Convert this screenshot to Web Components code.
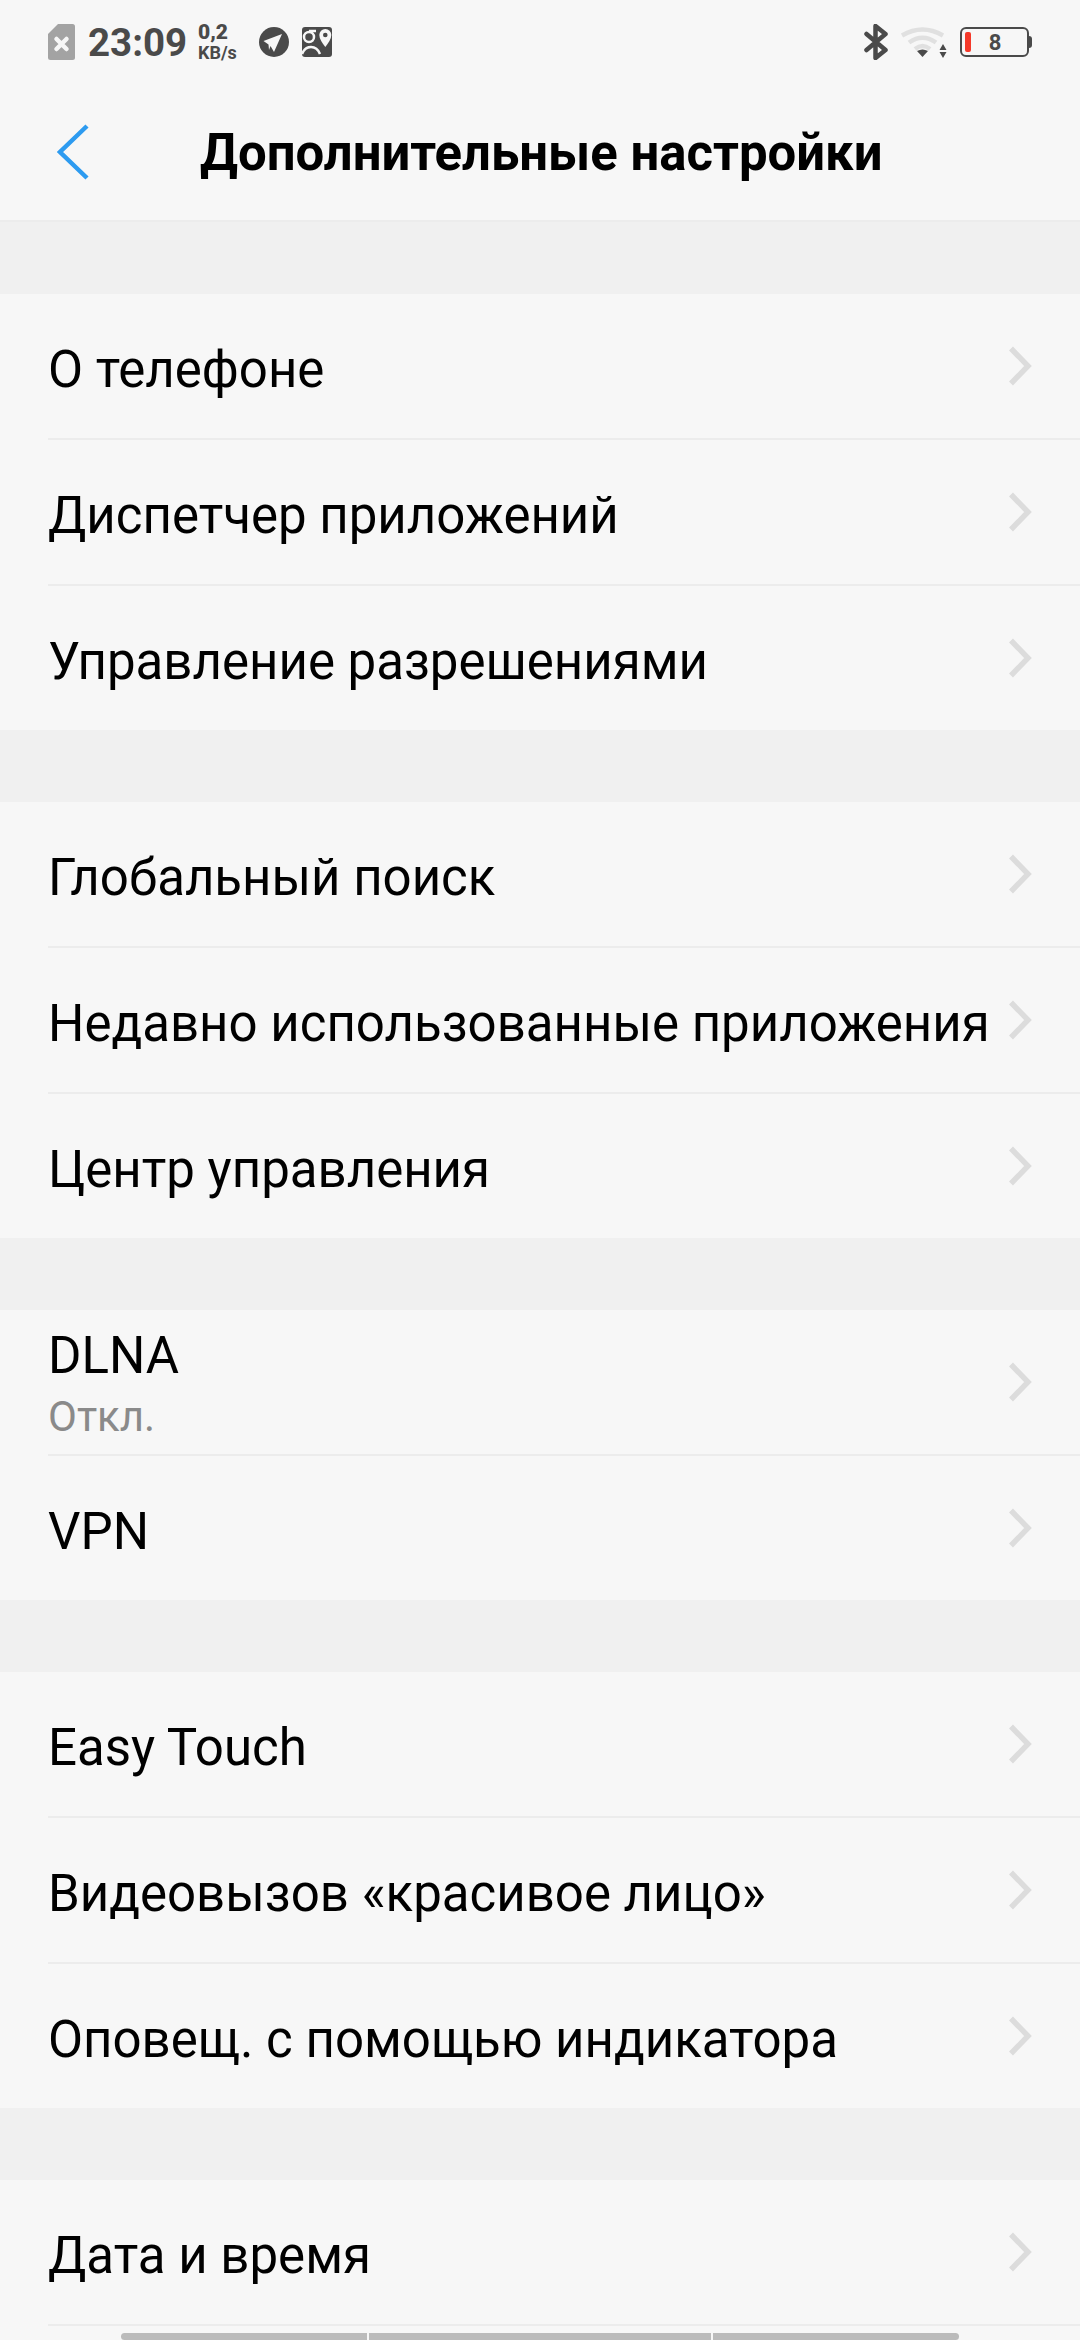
<!DOCTYPE html>
<html>
<head>
<meta charset="utf-8">
<style>
    html, body { margin: 0; padding: 0; }
    body {
        width: 1080px;
        height: 2340px;
        overflow: hidden;
        background: #f0f0f0;
        font-family: "Roboto", "Liberation Sans", sans-serif;
    }
</style>
</head>
<body>
<status-bar></status-bar>
<title-bar>Дополнительные настройки</title-bar>
<setting-group>
    <setting-row>О телефоне</setting-row>
    <setting-row>Диспетчер приложений</setting-row>
    <setting-row last>Управление разрешениями</setting-row>
</setting-group>
<setting-group>
    <setting-row>Глобальный поиск</setting-row>
    <setting-row>Недавно использованные приложения</setting-row>
    <setting-row last>Центр управления</setting-row>
</setting-group>
<setting-group>
    <setting-row sub="Откл.">DLNA</setting-row>
    <setting-row last>VPN</setting-row>
</setting-group>
<setting-group>
    <setting-row>Easy Touch</setting-row>
    <setting-row>Видеовызов «красивое лицо»</setting-row>
    <setting-row last>Оповещ. с помощью индикатора</setting-row>
</setting-group>
<setting-group>
    <setting-row>Дата и время</setting-row>
</setting-group>
<nav-handle></nav-handle>

<script>
class StatusBar extends HTMLElement {
    connectedCallback() {
        this.attachShadow({ mode: 'open' });
        this.shadowRoot.innerHTML = `
        <style>
            :host {
                display: flex;
                align-items: center;
                height: 84px;
                padding: 0 0 0 48px;
                background: #f7f7f7;
                color: #4a4a4a;
                font-family: "Roboto", "Liberation Sans", sans-serif;
            }
            svg { display: block; flex: none; }
            .time {
                font-size: 38.500px;
                font-weight: 700;
                margin-left: 13px;
                width: 97px;
                white-space: nowrap;
            }
            .speed {
                margin-left: 13px;
                font-size: 18px;
                font-weight: 700;
                line-height: 19px;
                width: 41px;
            }
            .speed b { display: block; font-size: 21px; line-height: 21px; }
            .right { margin-left: auto; display: flex; align-items: center; }
        </style>
        <svg width="27" height="36" viewBox="0 0 27 36">
            <path d="M10 0H24.500a2.500 2.500 0 0 1 2.500 2.500V33.500a2.500 2.500 0 0 1-2.500 2.500H2.500a2.500 2.500 0 0 1-2.500-2.500V10z" fill="#a3a3a3"/>
            <path d="M8.500 15l10 10M18.500 15l-10 10" stroke="#f7f7f7" stroke-width="4.500" stroke-linecap="round"/>
        </svg>
        <span class="time">23:09</span>
        <span class="speed"><b>0,2</b>KB/s</span>
        <svg width="30" height="30" viewBox="0 0 30 30" style="margin-left:20px">
            <circle cx="15" cy="15" r="15" fill="#4a4a4a"/>
            <path d="M4.500 14L23 7 15 25 11.500 19 10 23 9.500 17.500z" fill="#f7f7f7"/>
        </svg>
        <svg width="30" height="30" viewBox="0 0 30 30" style="margin-left:13px">
            <rect width="30" height="30" rx="3" fill="#4a4a4a"/>
            <circle cx="7" cy="10" r="5" fill="none" stroke="#f7f7f7" stroke-width="2.500"/>
            <path d="M7 4h7M0 27c2-5 5-7 9-7s7 2 9 7" fill="none" stroke="#f7f7f7" stroke-width="2.500"/>
            <path d="M23.300 2a6 6 0 0 1 6 6c0 4-3 8-6 12-3-4-6-8-6-12a6 6 0 0 1 6-6z" fill="#f7f7f7"/>
            <circle cx="23.300" cy="8" r="2.300" fill="#4a4a4a"/>
        </svg>
        <div class="right">
            <svg width="24" height="36" viewBox="0 0 24 36" style="margin-right:12px">
                <path d="M2.500 10l19 16-10 8V2l10 8-19 16" fill="none" stroke="#4a4a4a" stroke-width="4.500" stroke-linejoin="round" stroke-linecap="round"/>
            </svg>
            <svg width="47" height="36" viewBox="0 0 47 36" style="margin-right:13px">
                <path d="M2 11.500Q22.500-.5 43 11.500" fill="none" stroke="#e0e0e0" stroke-width="4.500"/>
                <path d="M9 18.500Q22.500 9 36 18.500" fill="none" stroke="#e0e0e0" stroke-width="4.500"/>
                <path d="M15 25Q22.500 19 30 25" fill="none" stroke="#e0e0e0" stroke-width="4.500"/>
                <path d="M17 27Q22.500 24 28 27L22.500 33z" fill="#4a4a4a"/>
                <path d="M43 20l-3.500 6h7zM43 34l-3.500-6h7z" fill="#4a4a4a"/>
            </svg>
            <battery-icon level="8"></battery-icon>
        </div>`;
    }
}

class BatteryIcon extends HTMLElement {
    connectedCallback() {
        this.attachShadow({ mode: 'open' });
        this.shadowRoot.innerHTML = `
        <style>
            :host { display: flex; align-items: center; margin-right: 48px; }
            .shell {
                box-sizing: border-box;
                width: 69px;
                height: 30px;
                border: 2px solid #4a4a4a;
                border-radius: 6px;
                display: flex;
                align-items: center;
                padding-left: 3px;
            }
            .fill { width: 6px; height: 20px; background: #f5392a; border-radius: 2px; flex: none; }
            .num {
                flex: 1;
                text-align: center;
                font-size: 22px;
                font-weight: 700;
                color: #4a4a4a;
                padding-right: 8px;
            }
            .tip { width: 3px; height: 12px; background: #4a4a4a; border-radius: 0 3px 3px 0; }
        </style>
        <div class="shell"><span class="fill"></span><span class="num">${this.getAttribute('level')}</span></div>
        <div class="tip"></div>`;
    }
}

class TitleBar extends HTMLElement {
    connectedCallback() {
        this.attachShadow({ mode: 'open' });
        this.shadowRoot.innerHTML = `
        <style>
            :host {
                display: flex;
                align-items: center;
                height: 138px;
                box-sizing: border-box;
                border-bottom: 2px solid #ececec;
                padding: 0 0 0 57px;
                background: #f7f7f7;
                font-family: "Roboto", "Liberation Sans", sans-serif;
            }
            svg { display: block; flex: none; }
            .title {
                flex: 1;
                margin-left: 111px;
                font-size: 50.900px;
                font-weight: 700;
                color: #000;
                white-space: nowrap;
            }
        </style>
        <svg width="32" height="56" viewBox="0 0 32 56">
            <path d="M30 2L3 28l27 26" fill="none" stroke="#2d9bf0" stroke-width="4.500"/>
        </svg>
        <span class="title"><slot></slot></span>`;
    }
}

class SettingGroup extends HTMLElement {
    connectedCallback() {
        this.attachShadow({ mode: 'open' });
        this.shadowRoot.innerHTML = `
        <style>
            :host { display: block; margin-top: 72px; background: #f7f7f7; }
        </style>
        <slot></slot>`;
    }
}

class SettingRow extends HTMLElement {
    connectedCallback() {
        let sub = this.getAttribute('sub');
        this.attachShadow({ mode: 'open' });
        this.shadowRoot.innerHTML = `
        <style>
            :host {
                display: block;
                font-family: "Roboto", "Liberation Sans", sans-serif;
            }
            .row {
                box-sizing: border-box;
                height: 146px;
                margin-left: 48px;
                display: flex;
                align-items: center;
                justify-content: space-between;
                border-bottom: 2px solid #ececec;
                padding-right: 47px;
            }
            :host([last]) .row { height: 144px; border-bottom: 0; }
            .text { display: flex; flex-direction: column; padding-top: 7px; }
            :host([sub]) .text { align-self: flex-start; padding-top: 16px; }
            .label { font-size: 51px; line-height: 60px; color: #000; white-space: nowrap; }
            .sub { font-size: 42px; line-height: 56px; margin-top: 3px; color: #8a8a8a; }
            svg { display: block; flex: none; }
        </style>
        <div class="row">
            <div class="text">
                <span class="label"><slot></slot></span>
                ${sub ? `<span class="sub">${sub}</span>` : ''}
            </div>
            <svg width="26" height="42" viewBox="0 0 26 42">
                <path d="M4 3.500L21 21 4 38.500" fill="none" stroke="#dcdcdc" stroke-width="5.500"/>
            </svg>
        </div>`;
    }
}

class NavHandle extends HTMLElement {
    connectedCallback() {
        this.attachShadow({ mode: 'open' });
        this.shadowRoot.innerHTML = `
        <style>
            :host {
                display: flex;
                justify-content: center;
                gap: 2px;
                height: 14px;
                padding-top: 7px;
                box-sizing: border-box;
                background: #f7f7f7;
            }
            span { background: #bbb; height: 7px; flex: none; }
            .a { width: 246px; border-radius: 5px 0 0 5px; }
            .b { width: 342px; }
            .c { width: 246px; border-radius: 0 5px 5px 0; }
        </style>
        <span class="a"></span><span class="b"></span><span class="c"></span>`;
    }
}

customElements.define('status-bar', StatusBar);
customElements.define('battery-icon', BatteryIcon);
customElements.define('title-bar', TitleBar);
customElements.define('setting-group', SettingGroup);
customElements.define('setting-row', SettingRow);
customElements.define('nav-handle', NavHandle);
</script>
</body>
</html>
